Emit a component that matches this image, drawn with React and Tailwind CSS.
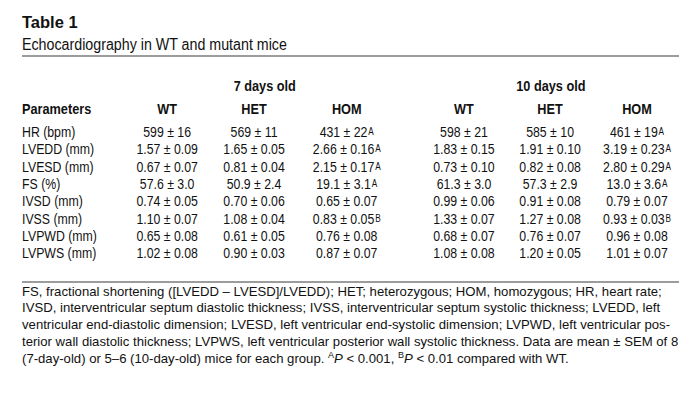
import React from "react";

const rows = [
  ["HR (bpm)", "599 ± 16", "569 ± 11", ["431 ± 22", "A"], "598 ± 21", "585 ± 10", ["461 ± 19", "A"]],
  ["LVEDD (mm)", "1.57 ± 0.09", "1.65 ± 0.05", ["2.66 ± 0.16", "A"], "1.83 ± 0.15", "1.91 ± 0.10", ["3.19 ± 0.23", "A"]],
  ["LVESD (mm)", "0.67 ± 0.07", "0.81 ± 0.04", ["2.15 ± 0.17", "A"], "0.73 ± 0.10", "0.82 ± 0.08", ["2.80 ± 0.29", "A"]],
  ["FS (%)", "57.6 ± 3.0", "50.9 ± 2.4", ["19.1 ± 3.1", "A"], "61.3 ± 3.0", "57.3 ± 2.9", ["13.0 ± 3.6", "A"]],
  ["IVSD (mm)", "0.74 ± 0.05", "0.70 ± 0.06", "0.65 ± 0.07", "0.99 ± 0.06", "0.91 ± 0.08", "0.79 ± 0.07"],
  ["IVSS (mm)", "1.10 ± 0.07", "1.08 ± 0.04", ["0.83 ± 0.05", "B"], "1.33 ± 0.07", "1.27 ± 0.08", ["0.93 ± 0.03", "B"]],
  ["LVPWD (mm)", "0.65 ± 0.08", "0.61 ± 0.05", "0.76 ± 0.08", "0.68 ± 0.07", "0.76 ± 0.07", "0.96 ± 0.08"],
  ["LVPWS (mm)", "1.02 ± 0.08", "0.90 ± 0.03", "0.87 ± 0.07", "1.08 ± 0.08", "1.20 ± 0.05", "1.01 ± 0.07"],
];

const cols = "grid grid-cols-[122px_110px_102px_124px_26px_110px_100px_112px]";

function Val({ v }) {
  if (Array.isArray(v)) {
    return (
      <span>
        {v[0]}
        <sup className="text-[10px] relative top-[-2px] ml-[1px]">{v[1]}</sup>
      </span>
    );
  }
  return <span>{v}</span>;
}

export default function App() {
  return (
    <div
      className="w-[700px] h-[408px] bg-white text-[#111] overflow-hidden"
      style={{ fontFamily: '"Liberation Sans", Arial, sans-serif' }}
    >
      <div className="pl-[22px] pt-[12px] pr-[22px]">
        <div className="text-[16.5px] leading-[20px] font-bold">Table 1</div>
        <div className="mt-[3px] h-[20px] text-[16px] leading-[20px] whitespace-nowrap">
          <span className="inline-block origin-left scale-x-[0.89]">
            Echocardiography in WT and mutant mice
          </span>
        </div>
        <div className="h-[2px] w-[657px] bg-[#9c9c9c]" />

        <div className="mt-[19px] w-[806px] origin-left scale-x-[0.82]">
          <div className={`${cols} h-[22.5px] text-[15.5px] leading-[20px] font-bold`}>
            <div />
            <div className="col-span-3 text-center pl-[12px]">7 days old</div>
            <div />
            <div className="col-span-3 text-center">10 days old</div>
          </div>
          <div className={`${cols} h-[24.4px] text-[15.5px] leading-[20px] font-bold`}>
            <div>Parameters</div>
            <div className="text-center">WT</div>
            <div className="text-center">HET</div>
            <div className="text-center">HOM</div>
            <div />
            <div className="text-center">WT</div>
            <div className="text-center">HET</div>
            <div className="text-center">HOM</div>
          </div>
          {rows.map((r) => (
            <div key={r[0]} className={`${cols} h-[17.33px] text-[15px] leading-[17.33px] whitespace-nowrap`}>
              <div>{r[0]}</div>
              <div className="text-center"><Val v={r[1]} /></div>
              <div className="text-center"><Val v={r[2]} /></div>
              <div className="text-center"><Val v={r[3]} /></div>
              <div />
              <div className="text-center"><Val v={r[4]} /></div>
              <div className="text-center"><Val v={r[5]} /></div>
              <div className="text-center"><Val v={r[6]} /></div>
            </div>
          ))}
        </div>

        <div className="mt-[19px] h-[2px] w-[657px] bg-[#9c9c9c]" />
        <div className="pt-[1px] text-[13.15px] leading-[16.8px] whitespace-nowrap">
          <div>FS, fractional shortening ([LVEDD – LVESD]/LVEDD); HET; heterozygous; HOM, homozygous; HR, heart rate;</div>
          <div>IVSD, interventricular septum diastolic thickness; IVSS, interventricular septum systolic thickness; LVEDD, left</div>
          <div>ventricular end-diastolic dimension; LVESD, left ventricular end-systolic dimension; LVPWD, left ventricular pos-</div>
          <div>terior wall diastolic thickness; LVPWS, left ventricular posterior wall systolic thickness. Data are mean ± SEM of 8</div>
          <div>
            (7-day-old) or 5–6 (10-day-old) mice for each group. <sup className="text-[9px]">A</sup>
            <i>P</i> &lt; 0.001, <sup className="text-[9px]">B</sup>
            <i>P</i> &lt; 0.01 compared with WT.
          </div>
        </div>
      </div>
    </div>
  );
}
